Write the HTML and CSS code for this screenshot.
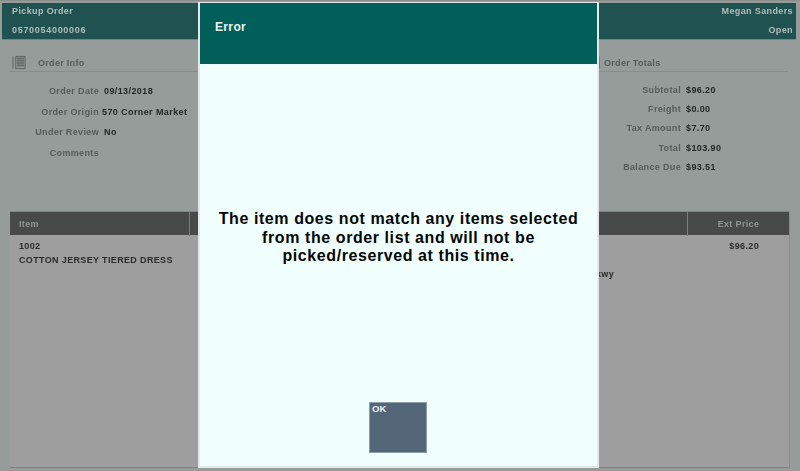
FILE: index.html
```html
<!DOCTYPE html>
<html lang="en">
<head>
  <meta charset="UTF-8">
  <meta name="viewport" content="width=device-width, initial-scale=1.0">
  <title>Pickup Order</title>
  <link rel="stylesheet" href="styles.css">
</head>
<body>

<div class="page">
  <div class="top-bar">
    <div class="top-row">
      <span>Pickup Order</span>
      <span>Megan Sanders</span>
    </div>
    <div class="top-row">
      <span class="order-number">0570054000006</span>
      <span>Open</span>
    </div>
  </div>

  <div class="info">
    <div class="panel panel-order">
      <div class="panel-title">
        <svg class="panel-icon" viewBox="0 0 15 15">
          <path d="M1 1v13M4 1h10v13H4z" fill="none" stroke="#5a605e"/>
          <path d="M5 3h8M5 5h8M5 7h8M5 9h8M5 11h8" stroke="#4c5250"/>
        </svg>
        <span>Order Info</span>
      </div>
      <div class="fields fields-order">
        <div class="field"><span class="label">Order Date</span><span class="value">09/13/2018</span></div>
        <div class="field"><span class="label">Order Origin</span><span class="value value-origin">570 Corner Market</span></div>
        <div class="field"><span class="label">Under Review</span><span class="value">No</span></div>
        <div class="field"><span class="label">Comments</span></div>
      </div>
    </div>
    <div class="panel panel-totals">
      <div class="panel-title">
        <svg class="panel-icon" viewBox="0 0 15 15">
          <path d="M1 1v13M4 1h10v13H4z" fill="none" stroke="#5a605e"/>
          <path d="M5 3h8M5 5h8M5 7h8M5 9h8M5 11h8" stroke="#4c5250"/>
        </svg>
        <span>Order Totals</span>
      </div>
      <div class="fields fields-totals">
        <div class="field"><span class="label">Subtotal</span><span class="value">$96.20</span></div>
        <div class="field"><span class="label">Freight</span><span class="value">$0.00</span></div>
        <div class="field"><span class="label">Tax Amount</span><span class="value">$7.70</span></div>
        <div class="field"><span class="label">Total</span><span class="value">$103.90</span></div>
        <div class="field"><span class="label">Balance Due</span><span class="value">$93.51</span></div>
      </div>
    </div>
  </div>

  <div class="items">
    <div class="items-head">
      <div class="head-cell">Item</div>
      <div class="head-cell">Item</div>
      <div class="head-cell"></div>
      <div class="head-cell head-price">Ext Price</div>
    </div>
    <div class="items-row">
      <div class="cell">
        <div>1002</div>
        <div class="cell-line">COTTON JERSEY TIERED DRESS</div>
      </div>
      <div class="cell">A</div>
      <div class="cell cell-address">Pkwy</div>
      <div class="cell cell-price">$96.20</div>
    </div>
  </div>
</div>

<div class="dialog">
  <div class="dialog-head">Error</div>
  <div class="dialog-body">
    <p class="dialog-message">The item does not match any items selected from the order list and will not be picked/reserved at this time.</p>
    <button class="ok-button">OK</button>
  </div>
</div>

</body>
</html>
```

FILE: styles.css
```css
html, body {
  margin: 0;
  height: 100%;
}
body {
  font-family: "Liberation Sans", Arial, sans-serif;
  background-color: #949b98;
  overflow: hidden;
}
.page {
  width: 800px;
  height: 471px;
  box-sizing: border-box;
  padding: 2px 4px 3px 2px;
  display: flex;
  flex-direction: column;
  background-color: #959c99;
  border-top: 1px solid #8a8f8d;
  filter: blur(0.4px);
}
.top-bar {
  background-color: #1f5250;
  color: #b4bcba;
  font-size: 9px;
  font-weight: bold;
  letter-spacing: 0.38px;
  height: 37px;
  box-sizing: border-box;
  padding: 3px 3px 0 10px;
  display: flex;
  flex-direction: column;
  gap: 8px;
  border-bottom: 1px solid #6e8583;
}
.top-row {
  display: flex;
  justify-content: space-between;
  line-height: 11px;
}
.order-number {
  letter-spacing: 0.7px;
}
.info {
  display: flex;
  justify-content: space-between;
  padding: 14px 8px 0 8px;
  height: 171px;
  box-sizing: border-box;
  font-size: 9px;
  font-weight: bold;
  letter-spacing: 0.3px;
}
.panel-order {
  width: 400px;
}
.panel-totals {
  width: 212px;
}
.panel-title {
  display: flex;
  align-items: center;
  gap: 12px;
  height: 17px;
  padding-left: 2px;
  color: #565c5a;
  border-bottom: 1px solid #878d8b;
}
.panel-totals .panel-title {
  gap: 4px;
  padding-left: 10px;
}
.panel-icon {
  width: 14px;
  height: 15px;
}
.fields {
  display: flex;
  flex-direction: column;
}
.fields-order {
  padding-top: 14px;
  gap: 9.5px;
}
.fields-totals {
  padding-top: 13px;
  gap: 8.2px;
}
.field {
  display: flex;
  gap: 5px;
  line-height: 11px;
}
.label {
  text-align: right;
  color: #565c5a;
  letter-spacing: 0.35px;
}
.fields-order .label {
  width: 89px;
}
.fields-totals .label {
  width: 105px;
}
.value {
  color: #242827;
  letter-spacing: 0.4px;
}
.value-origin {
  margin-left: -2px;
}
.items {
  flex: 1;
  margin: 0 6px 0 8px;
  display: flex;
  flex-direction: column;
  background-color: #9e9e9e;
  border-right: 1px solid #858b89;
  border-bottom: 1px solid #7c8280;
  font-size: 9px;
  font-weight: bold;
  letter-spacing: 0.35px;
}
.items-head,
.items-row {
  display: grid;
  grid-template-columns: 180px 180px 318px 1fr;
}
.items-head {
  height: 24px;
  background-color: #474a48;
  color: #8f9593;
  line-height: 24px;
  border-top: 1px solid #7f8583;
  box-sizing: border-box;
}
.head-cell {
  padding-left: 9px;
  border-right: 1px solid #7a807e;
}
.head-cell:last-child {
  border-right: none;
}
.head-price {
  padding-left: 0;
  text-align: center;
}
.items-row {
  padding-top: 5px;
  color: #2a2c2c;
  line-height: 13px;
}
.cell {
  padding-left: 9px;
}
.cell-line {
  margin-top: 1px;
}
.cell-address {
  padding-top: 28px;
  padding-right: 74px;
  text-align: right;
}
.cell-price {
  padding: 0 30px 0 0;
  text-align: right;
}

/* dialog sits over the dimmed order page */
.dialog {
  position: absolute;
  left: 198px;
  top: 2px;
  width: 401px;
  height: 466px;
  box-sizing: border-box;
  border: 2px solid #e6e8e8;
  border-top-width: 1px;
  display: flex;
  flex-direction: column;
  background-color: #f0fffb;
}
.dialog-head {
  height: 61px;
  flex-shrink: 0;
  box-sizing: border-box;
  padding: 17px 0 0 15px;
  background-color: #006059;
  color: #eef5f3;
  font-size: 12px;
  font-weight: bold;
  letter-spacing: 0.35px;
  line-height: 15px;
}
.dialog-body {
  flex: 1;
  display: flex;
  flex-direction: column;
  align-items: center;
}
.dialog-message {
  margin: 146px 0 0;
  width: 380px;
  text-align: center;
  color: #050505;
  font-size: 16px;
  font-weight: bold;
  line-height: 18.5px;
  letter-spacing: 0.58px;
}
.ok-button {
  margin: 136.5px 1px 0 0;
  width: 58px;
  height: 51px;
  padding: 1px 0 0 2px;
  border: 1px solid #8fa0ad;
  background-color: #536779;
  color: #f0f4f4;
  font-family: inherit;
  font-size: 9.5px;
  font-weight: bold;
  line-height: 10px;
  text-align: left;
  display: flex;
  align-items: flex-start;
  cursor: pointer;
}
```
